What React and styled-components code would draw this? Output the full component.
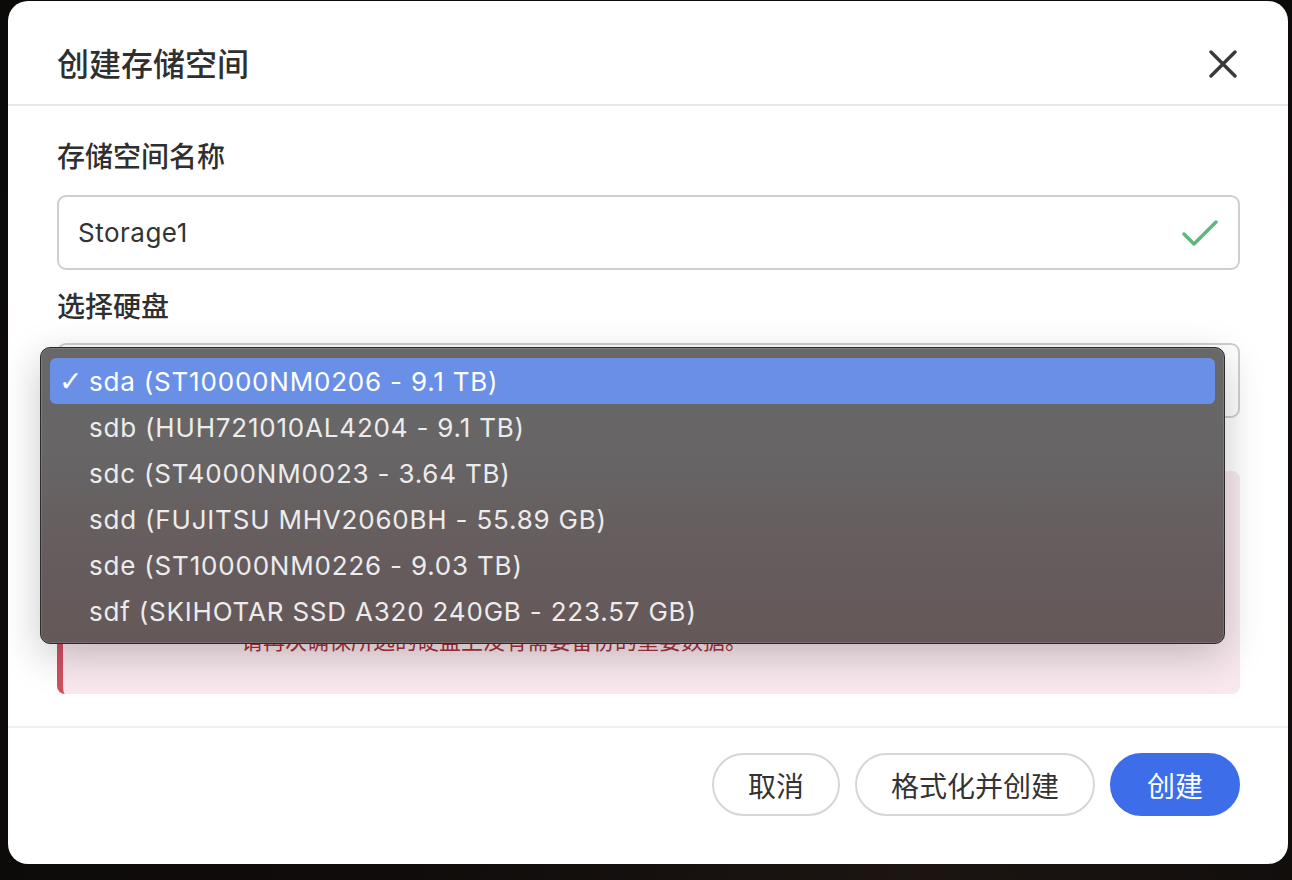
import styled, { createGlobalStyle } from "styled-components";

const GlobalStyle = createGlobalStyle`
  html, body {
    margin: 0;
    padding: 0;
    background: #100d0c;
  }
  * {
    box-sizing: border-box;
  }
  body {
    font-family: Inter, "Noto Sans CJK SC", "Noto Sans", sans-serif;
    color: #333;
  }
`;

const Page = styled.div`
  width: 1292px;
  height: 880px;
  padding: 1px 0 0 8px;
  background: radial-gradient(circle at 70% 100%, #1c1512 0%, #0f0c0b 40%, #0c0a09 100%);
`;

const Modal = styled.div`
  width: 1280px;
  height: 863px;
  background: #fff;
  border-radius: 20px;
  display: flex;
  flex-direction: column;
  overflow: hidden;
`;

const Header = styled.header`
  height: 105px;
  flex: none;
  display: flex;
  align-items: center;
  justify-content: space-between;
  padding: 18px 50px 0 49px;
  border-bottom: 2px solid #e6e7ea;
`;

const Title = styled.h1`
  margin: 0;
  font-size: 32px;
  font-weight: 500;
  color: #2f2f2f;
`;

const CloseButton = styled.button`
  width: 30px;
  height: 30px;
  margin-top: 5px;
  padding: 0;
  border: none;
  background: none;
  display: flex;
  align-items: center;
  justify-content: center;
  color: #3a3a3a;
`;

const Body = styled.section`
  flex: 1;
  display: flex;
  flex-direction: column;
  padding: 33px 48px 0 49px;
`;

const Label = styled.div`
  font-size: 28px;
  font-weight: 500;
  line-height: 36px;
  color: #2f2f2f;
  margin-bottom: ${(p) => p.gap || 20}px;
`;

const Field = styled.div`
  position: relative;
  height: 75px;
  border: 2px solid #cfcfcf;
  border-radius: 9px;
  display: flex;
  align-items: center;
  justify-content: space-between;
  padding: 0 20px 0 19px;
  font-size: 26px;
  letter-spacing: 0.5px;
  color: #333;
  margin-bottom: ${(p) => p.gap || 0}px;
  background: #fff;
`;

const Warning = styled.div`
  height: 223px;
  border-radius: 8px;
  border-left: 6px solid #d0505f;
  background: #f9e9ee;
  display: grid;
  grid-template-columns: 156px 1fr;
  align-content: end;
  padding: 0 28px 37px 22px;
  color: #a8313c;
  font-size: 22px;
  line-height: 32px;
`;

const WarnTitle = styled.div`
  font-weight: 600;
  grid-row: 1 / span 3;
  align-self: start;
`;

const WarnLine = styled.div`
  grid-column: 2;
  white-space: nowrap;
`;

const Menu = styled.div`
  position: absolute;
  top: 2px;
  left: -19px;
  width: 1185px;
  height: 297px;
  padding: 10px 9px 8px;
  border-radius: 10px;
  border: 1px solid #2b2a2a;
  background: linear-gradient(180deg, #686868 0%, #676566 35%, #665c5d 70%, #655859 100%);
  box-shadow: inset 0 0 0 1px rgba(255, 255, 255, 0.12), 0 12px 40px rgba(0, 0, 0, 0.22);
  z-index: 2;
`;

const Option = styled.div`
  height: 46px;
  border-radius: 6px;
  display: flex;
  align-items: center;
  font-size: 26px;
  letter-spacing: 0.8px;
  color: ${(p) => (p.selected ? "#fff" : "#ececec")};
  background: ${(p) => (p.selected ? "#6990e6" : "transparent")};
  white-space: nowrap;
`;

const Tick = styled.span`
  width: 39px;
  padding-left: 9px;
  font-family: "DejaVu Sans", sans-serif;
  font-size: 28px;
  font-weight: 700;
  letter-spacing: 0;
`;

const Footer = styled.footer`
  height: 138px;
  flex: none;
  border-top: 2px solid #eeeff1;
  display: flex;
  justify-content: flex-end;
  gap: 15px;
  padding: 25px 48px 0 0;
`;

const Button = styled.button`
  height: 63px;
  padding: 0 ${(p) => p.pad || 34}px;
  border-radius: 32px;
  font-family: Inter, "Noto Sans CJK SC", sans-serif;
  font-size: 28px;
  border: 2px solid ${(p) => (p.primary ? "#3d6de9" : "#d6d6d6")};
  background: ${(p) => (p.primary ? "#3d6de9" : "#fff")};
  color: ${(p) => (p.primary ? "#fff" : "#333")};
`;

const disks = [
  "sda (ST10000NM0206 - 9.1 TB)",
  "sdb (HUH721010AL4204 - 9.1 TB)",
  "sdc (ST4000NM0023 - 3.64 TB)",
  "sdd (FUJITSU MHV2060BH - 55.89 GB)",
  "sde (ST10000NM0226 - 9.03 TB)",
  "sdf (SKIHOTAR SSD A320 240GB - 223.57 GB)",
];

function CloseIcon() {
  return (
    <svg width="28" height="28" viewBox="0 0 28 28" fill="none">
      <path d="M2 2L26 26M26 2L2 26" stroke="currentColor" strokeWidth="3.4" strokeLinecap="round" />
    </svg>
  );
}

function CheckIcon() {
  return (
    <svg width="36" height="28" viewBox="0 0 36 28" fill="none">
      <path d="M2 15L12 25L34 3" stroke="#5cb87a" strokeWidth="3.4" strokeLinecap="round" strokeLinejoin="round" />
    </svg>
  );
}

export default function App() {
  return (
    <>
      <GlobalStyle />
      <Page>
        <Modal>
          <Header>
            <Title>创建存储空间</Title>
            <CloseButton>
              <CloseIcon />
            </CloseButton>
          </Header>
          <Body>
            <Label>存储空间名称</Label>
            <Field gap={19}>
              <span>Storage1</span>
              <CheckIcon />
            </Field>
            <Label gap={18}>选择硬盘</Label>
            <Field gap={53}>
              <span>{disks[0]}</span>
              <Menu>
                {disks.map((d, i) => (
                  <Option key={d} selected={i === 0}>
                    <Tick>{i === 0 ? "✓" : ""}</Tick>
                    {d}
                  </Option>
                ))}
              </Menu>
            </Field>
            <Warning>
              <WarnTitle>注意</WarnTitle>
              <WarnLine>创建存储空间将会格式化所选硬盘，</WarnLine>
              <WarnLine>硬盘上的所有数据都将被永久删除。</WarnLine>
              <WarnLine>请再次确保所选的硬盘上没有需要备份的重要数据。</WarnLine>
            </Warning>
          </Body>
          <Footer>
            <Button pad={34}>取消</Button>
            <Button pad={34}>格式化并创建</Button>
            <Button primary pad={35}>创建</Button>
          </Footer>
        </Modal>
      </Page>
    </>
  );
}
